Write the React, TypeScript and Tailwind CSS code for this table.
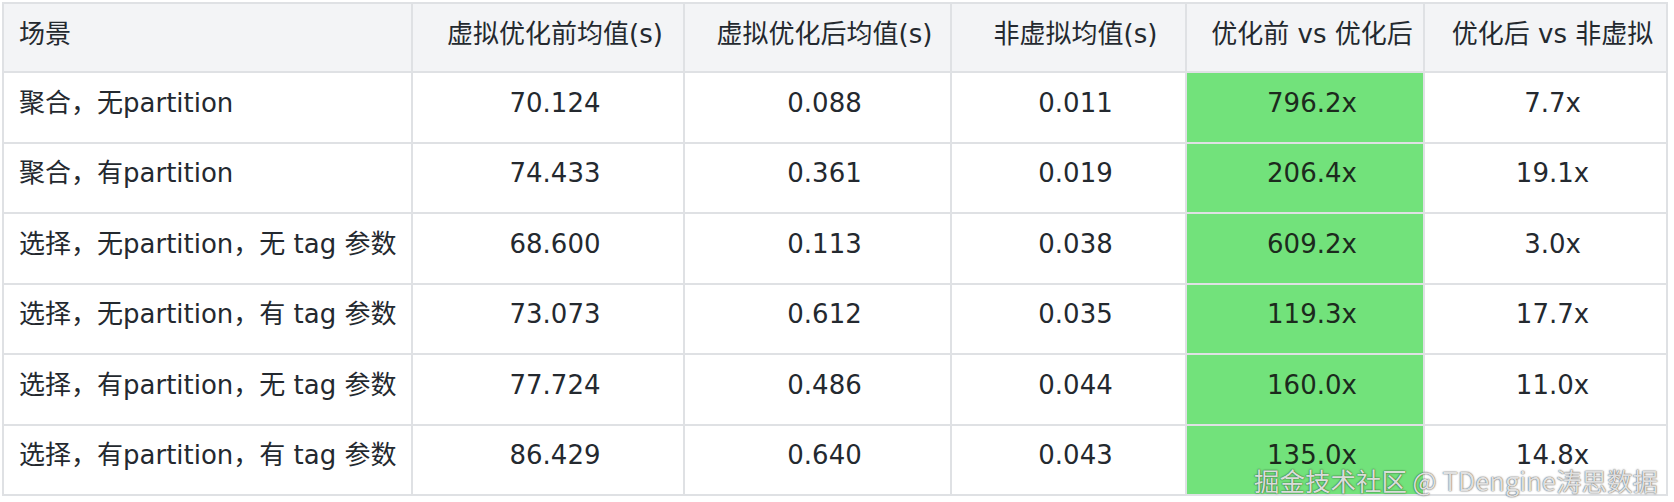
const headers = [
  '场景',
  '虚拟优化前均值(s)',
  '虚拟优化后均值(s)',
  '非虚拟均值(s)',
  '优化前 vs 优化后',
  '优化后 vs 非虚拟',
];

const rows = [
  ['聚合，无partition', '70.124', '0.088', '0.011', '796.2x', '7.7x'],
  ['聚合，有partition', '74.433', '0.361', '0.019', '206.4x', '19.1x'],
  ['选择，无partition，无 tag 参数', '68.600', '0.113', '0.038', '609.2x', '3.0x'],
  ['选择，无partition，有 tag 参数', '73.073', '0.612', '0.035', '119.3x', '17.7x'],
  ['选择，有partition，无 tag 参数', '77.724', '0.486', '0.044', '160.0x', '11.0x'],
  ['选择，有partition，有 tag 参数', '86.429', '0.640', '0.043', '135.0x', '14.8x'],
];

// hauteur de chaque ligne de données (bordure comprise)
const rowHeights = ['h-[71px]', 'h-[70px]', 'h-[71px]', 'h-[70px]', 'h-[71px]', 'h-[70px]'];

export default function App() {
  return (
    <div
      className="relative h-[502px] w-[1674px] overflow-hidden bg-white pl-[2px] pt-[2px] text-[26px] text-[#24292f]"
      style={{ fontFamily: "'DejaVu Sans', 'Noto Sans CJK SC', sans-serif" }}
    >
      <div className="grid w-[1666px] grid-cols-[409px_272px_267px_235px_238px_243px] border-l-2 border-t-2 border-[#dfe1e4]">
        {/* En-tête */}
        {headers.map((h, i) => (
          <div
            key={h}
            className={`flex h-[69px] items-center whitespace-nowrap border-b-2 border-r-2 border-[#dfe1e4] bg-[#f3f4f6] pb-[8px] leading-[36px] ${
              i === 0 ? 'justify-start pl-[15px]' : 'justify-center pl-[22px] pr-[8px]'
            }`}
          >
            {h}
          </div>
        ))}

        {/* Lignes */}
        {rows.map((row, r) =>
          row.map((cell, i) => (
            <div
              key={`${r}-${i}`}
              className={`flex ${rowHeights[r]} items-center whitespace-nowrap border-b-2 border-r-2 border-[#dfe1e4] pb-[10px] leading-[36px] ${
                i === 0 ? 'justify-start pl-[15px]' : 'justify-center pl-[22px] pr-[8px]'
              } ${i === 4 ? 'bg-[#72e27b] text-[#1c2a1d]' : 'bg-white'}`}
            >
              {cell}
            </div>
          ))
        )}
      </div>

      {/* Filigrane */}
      <div
        className="absolute bottom-[6px] right-[16px] whitespace-nowrap text-[25.5px] leading-[32px] text-[#f4f4f4]/90"
        style={{
          fontFamily: "'Noto Sans CJK SC', sans-serif",
          textShadow: '0 0 2px rgba(0,0,0,0.5), 0 0 1px rgba(0,0,0,0.55)',
        }}
      >
        掘金技术社区 @ TDengine涛思数据
      </div>
    </div>
  );
}
